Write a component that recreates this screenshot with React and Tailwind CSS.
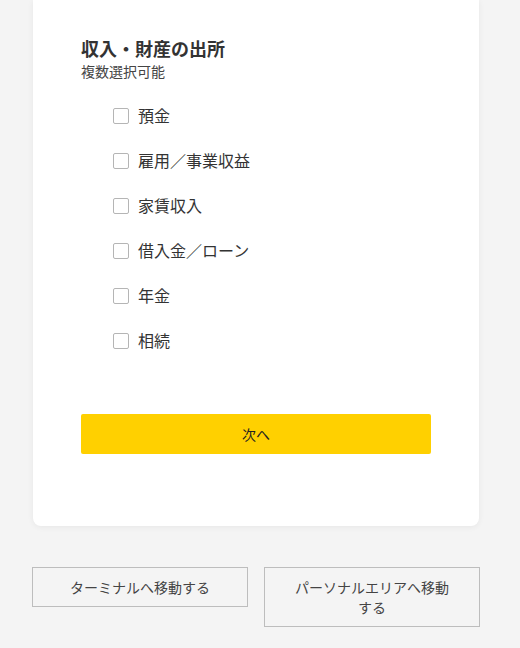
import { useState } from 'react'

const sources = ['預金', '雇用／事業収益', '家賃収入', '借入金／ローン', '年金', '相続']

export default function App() {
  const [checked, setChecked] = useState({})

  const toggle = (name) => setChecked({ ...checked, [name]: !checked[name] })

  const linkButton =
    'border border-[#bdbdbd] px-6 py-[9px] text-[14px] leading-5 text-[#444] text-center'

  return (
    <div className="min-h-screen bg-[#f4f4f4] font-['Noto_Sans_CJK_JP',sans-serif]">
      {/* Card */}
      <div className="ml-[33px] w-[446px] bg-white rounded-b-lg shadow-[0_1px_6px_rgba(0,0,0,0.06)] px-12 pt-9 pb-[72px]">
        <h2 className="text-[18px] leading-6 font-bold text-[#333]">収入・財産の出所</h2>
        <p className="mt-px text-[14px] leading-5 text-[#444]">複数選択可能</p>

        <div className="mt-3 pl-8">
          {sources.map((s) => (
            <label key={s} className="flex items-center h-[45px] cursor-pointer">
              <input
                type="checkbox"
                checked={!!checked[s]}
                onChange={() => toggle(s)}
                className="appearance-none w-4 h-4 border border-[#b5b5b5] rounded-[2px] bg-white checked:bg-[#ffd000]"
              />
              <span className="ml-[9px] text-[16px] leading-6 -mt-0.5 text-[#333]">{s}</span>
            </label>
          ))}
        </div>

        <button className="mt-[51px] w-full h-10 rounded-[2px] bg-[#ffd000] text-[14px] text-[#222]">
          次へ
        </button>
      </div>

      {/* Navigation */}
      <div className="ml-8 mt-[41px] w-[448px] grid grid-cols-2 gap-4 items-start">
        <button className={linkButton}>ターミナルへ移動する</button>
        <button className={linkButton}>パーソナルエリアへ移動する</button>
      </div>
    </div>
  )
}
